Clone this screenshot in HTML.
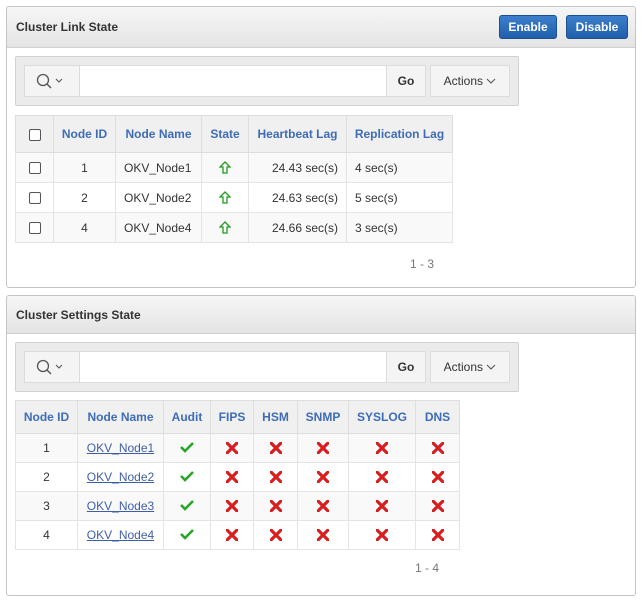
<!DOCTYPE html>
<html><head><meta charset="utf-8"><style>
*{box-sizing:border-box;margin:0;padding:0}
body{width:643px;height:604px;background:#fff;font-family:"Liberation Sans",sans-serif;font-size:12px;color:#333;position:relative;overflow:hidden}
.abs{position:absolute}
.panel{position:absolute;left:6px;width:630px;border:1px solid #c4c4c4;border-radius:3px;background:#fff}
.hdr{height:41px;background:linear-gradient(#f6f6f6,#e4e4e4);border-bottom:1px solid #cfcfcf;border-radius:3px 3px 0 0;font-weight:bold;font-size:12px;color:#333;padding:13px 0 0 9px}
.btn{position:absolute;top:8px;height:24px;background:linear-gradient(#3e7fcc,#1f5fab);border:1px solid #1a4f90;border-radius:3px;color:#fff;font-weight:bold;font-size:12px;text-align:center;line-height:22px}
.sb{position:absolute;left:8px;width:504px;height:50px;background:#ebebeb;border:1px solid #d2d2d2;border-radius:2px}
.sicon{position:absolute;left:8px;top:8px;width:56px;height:32px;background:#f4f4f4;border:1px solid #dcdcdc;border-right:none}
.inp{position:absolute;left:63px;top:8px;width:308px;height:32px;background:#fff;border:1px solid #dcdcdc}
.go{position:absolute;left:370px;top:8px;width:40px;height:32px;background:#f4f4f4;border:1px solid #dcdcdc;font-weight:bold;text-align:center;line-height:30px;color:#333}
.act{position:absolute;left:414px;top:8px;width:80px;height:32px;background:#f4f4f4;border:1px solid #dcdcdc;text-align:center;line-height:30px;color:#333}
table{position:absolute;border-collapse:collapse;table-layout:fixed;font-size:12px}
td,th{border:1px solid #e4e4e4;padding:0}
th{background:#f0f0f0;color:#3e6cb6;font-weight:bold;border-color:#dedede}
tr.a td{background:#f9f9f9}
.cb{display:inline-block;width:12px;height:12px;border:1px solid #555;border-radius:2px;background:#fff;vertical-align:middle}
a{color:#3e5fa8;text-decoration:underline}
.c{text-align:center}.r{text-align:right;padding-right:8px}.l{text-align:left;padding-left:8px}
.pg{position:absolute;color:#777;font-size:12px}
</style></head><body>

<div class="panel" style="top:6px;height:282px">
 <div class="hdr">Cluster Link State</div>
 <div class="btn" style="left:492px;width:58px">Enable</div>
 <div class="btn" style="left:559px;width:62px">Disable</div>
 <div class="sb" style="top:49px">
  <div class="sicon"><svg width="56" height="30" viewBox="0 0 56 30"><circle cx="18" cy="14" r="5.5" fill="none" stroke="#555" stroke-width="1.3"/><line x1="22" y1="18" x2="26" y2="22" stroke="#555" stroke-width="1.4"/><polyline points="31,13 34,16 37,13" fill="none" stroke="#555" stroke-width="1.1"/></svg></div>
  <div class="inp"></div><div class="go">Go</div>
  <div class="act">Actions <svg width="10" height="8" viewBox="0 0 10 8"><polyline points="1,2 5,6 9,2" fill="none" stroke="#555" stroke-width="1.1"/></svg></div>
 </div>
</div>
<table style="left:15px;top:115px;width:437px">
 <colgroup><col style="width:38px"><col style="width:62px"><col style="width:86px"><col style="width:47px"><col style="width:98px"><col style="width:106px"></colgroup>
 <tr style="height:37px"><th><span class="cb"></span></th><th>Node ID</th><th>Node Name</th><th>State</th><th>Heartbeat Lag</th><th>Replication Lag</th></tr>
 <tr class="a" style="height:30px"><td class="c"><span class="cb"></span></td><td class="c">1</td><td class="l">OKV_Node1</td><td class="c"><svg width="12" height="14" viewBox="0 0 12 14"><path d="M6 1 L11 6 L8 6 L8 12 L4 12 L4 6 L1 6 Z" fill="none" stroke="#1f9a1f" stroke-width="1.3"/></svg></td><td class="r">24.43 sec(s)</td><td class="l">4 sec(s)</td></tr>
 <tr style="height:30px"><td class="c"><span class="cb"></span></td><td class="c">2</td><td class="l">OKV_Node2</td><td class="c"><svg width="12" height="14" viewBox="0 0 12 14"><path d="M6 1 L11 6 L8 6 L8 12 L4 12 L4 6 L1 6 Z" fill="none" stroke="#1f9a1f" stroke-width="1.3"/></svg></td><td class="r">24.63 sec(s)</td><td class="l">5 sec(s)</td></tr>
 <tr class="a" style="height:30px"><td class="c"><span class="cb"></span></td><td class="c">4</td><td class="l">OKV_Node4</td><td class="c"><svg width="12" height="14" viewBox="0 0 12 14"><path d="M6 1 L11 6 L8 6 L8 12 L4 12 L4 6 L1 6 Z" fill="none" stroke="#1f9a1f" stroke-width="1.3"/></svg></td><td class="r">24.66 sec(s)</td><td class="l">3 sec(s)</td></tr>
</table>
<div class="pg" style="left:410px;top:257px">1 - 3</div>

<div class="panel" style="top:295px;height:301px">
 <div class="hdr" style="height:38px;padding-top:12px">Cluster Settings State</div>
 <div class="sb" style="top:46px">
  <div class="sicon"><svg width="56" height="30" viewBox="0 0 56 30"><circle cx="18" cy="14" r="5.5" fill="none" stroke="#555" stroke-width="1.3"/><line x1="22" y1="18" x2="26" y2="22" stroke="#555" stroke-width="1.4"/><polyline points="31,13 34,16 37,13" fill="none" stroke="#555" stroke-width="1.1"/></svg></div>
  <div class="inp"></div><div class="go">Go</div>
  <div class="act">Actions <svg width="10" height="8" viewBox="0 0 10 8"><polyline points="1,2 5,6 9,2" fill="none" stroke="#555" stroke-width="1.1"/></svg></div>
 </div>
</div>
<table style="left:15px;top:400px;width:444px">
 <colgroup><col style="width:62px"><col style="width:86px"><col style="width:47px"><col style="width:43px"><col style="width:44px"><col style="width:51px"><col style="width:67px"><col style="width:44px"></colgroup>
 <tr style="height:33px"><th>Node ID</th><th>Node Name</th><th>Audit</th><th>FIPS</th><th>HSM</th><th>SNMP</th><th>SYSLOG</th><th>DNS</th></tr>
 <tr class="a" style="height:29px"><td class="c">1</td><td class="c"><a>OKV_Node1</a></td><td class="c"><svg width="14" height="12" viewBox="0 0 14 12"><path d="M1 6 L5 10 L13 2" fill="none" stroke="#2aa52a" stroke-width="2.6"/></svg></td><td class="c">X</td><td class="c">X</td><td class="c">X</td><td class="c">X</td><td class="c">X</td></tr>
 <tr style="height:29px"><td class="c">2</td><td class="c"><a>OKV_Node2</a></td><td class="c"><svg width="14" height="12" viewBox="0 0 14 12"><path d="M1 6 L5 10 L13 2" fill="none" stroke="#2aa52a" stroke-width="2.6"/></svg></td><td class="c">X</td><td class="c">X</td><td class="c">X</td><td class="c">X</td><td class="c">X</td></tr>
 <tr class="a" style="height:29px"><td class="c">3</td><td class="c"><a>OKV_Node3</a></td><td class="c"><svg width="14" height="12" viewBox="0 0 14 12"><path d="M1 6 L5 10 L13 2" fill="none" stroke="#2aa52a" stroke-width="2.6"/></svg></td><td class="c">X</td><td class="c">X</td><td class="c">X</td><td class="c">X</td><td class="c">X</td></tr>
 <tr style="height:29px"><td class="c">4</td><td class="c"><a>OKV_Node4</a></td><td class="c"><svg width="14" height="12" viewBox="0 0 14 12"><path d="M1 6 L5 10 L13 2" fill="none" stroke="#2aa52a" stroke-width="2.6"/></svg></td><td class="c">X</td><td class="c">X</td><td class="c">X</td><td class="c">X</td><td class="c">X</td></tr>
</table>
<div class="pg" style="left:415px;top:561px">1 - 4</div>

<style>
table td.c:nth-child(n+4){font-size:0}
table td.c:nth-child(n+4)::before{content:"";display:inline-block;width:12px;height:12px;vertical-align:middle;background:
linear-gradient(45deg,transparent 40%,#d81e1e 40%,#d81e1e 60%,transparent 60%),
linear-gradient(-45deg,transparent 40%,#d81e1e 40%,#d81e1e 60%,transparent 60%)}
table:first-of-type td.c:nth-child(n+4)::before{display:none}
</style>
</body></html>
